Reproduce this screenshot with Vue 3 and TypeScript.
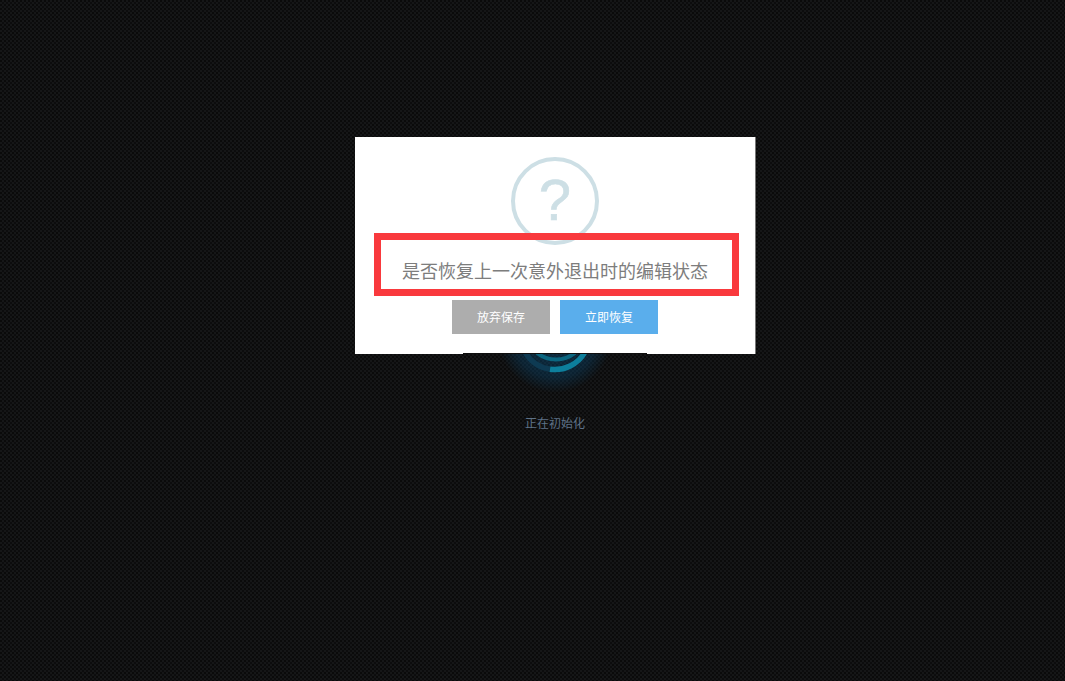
<script setup lang="ts">
const title: string = '是否恢复上一次意外退出时的编辑状态'
</script>

<template>
  <div class="page">
    <div class="loader">
      <div class="spinner">
        <svg width="120" height="120" viewBox="0 0 120 120">
          <path class="arc dim" d="M 30 77 A 34.5 34.5 0 0 0 55 94.2" />
          <path class="arc bright" d="M 55 94.2 A 34.5 34.5 0 0 0 90 77" />
          <path class="arc inner" d="M 42 78 A 31 31 0 0 0 80 78" />
        </svg>
      </div>
      <div class="loading-text">正在初始化</div>
    </div>

    <div class="modal">
      <div class="icon">
        <svg width="90" height="90" viewBox="0 0 90 90">
          <circle cx="45" cy="45" r="42" fill="none" stroke="#cddfe5" stroke-width="4" />
        </svg>
        <span class="mark">?</span>
      </div>
      <div class="message">{{ title }}</div>
      <div class="actions">
        <button class="btn grey" type="button">放弃保存</button>
        <button class="btn blue" type="button">立即恢复</button>
      </div>
      <div class="edge"></div>
    </div>
  </div>
</template>

<style scoped>
.page {
  position: relative;
  width: 1065px;
  height: 681px;
  box-sizing: border-box;
  padding-left: 45px;
  overflow: hidden;
  display: flex;
  justify-content: center;
  background-color: #151617;
  background-image:
    radial-gradient(circle at 1px 1px, #0a0a0a 1px, transparent 1.3px),
    radial-gradient(circle at 3px 3px, #0c0c0d 1px, transparent 1.3px);
  background-size: 4px 4px;
  font-family: "Liberation Sans", "Noto Sans CJK SC", sans-serif;
}
.loader {
  display: flex;
  flex-direction: column;
  align-items: center;
  padding-top: 275px;
}
.spinner {
  width: 120px;
  height: 120px;
  border-radius: 50%;
  background: radial-gradient(circle at 50% 50%, rgba(10, 80, 125, 0.5) 0, rgba(10, 70, 110, 0.38) 50%, rgba(10, 60, 90, 0) 68%);
}
.arc {
  fill: none;
  stroke-width: 5.5;
}
.arc.dim {
  stroke: #0e3a52;
}
.arc.bright {
  stroke: #0d7f9c;
}
.arc.inner {
  stroke: #0b6680;
  stroke-width: 4;
}
.loading-text {
  margin-top: 21px;
  font-size: 12px;
  line-height: 16px;
  color: #5e7287;
}
.modal {
  position: absolute;
  left: 355px;
  top: 137px;
  width: 400px;
  height: 217px;
  box-sizing: border-box;
  padding-top: 19px;
  background: #fff;
  box-shadow: 1px 0 0 #777;
  display: flex;
  flex-direction: column;
  align-items: center;
}
.icon {
  position: relative;
  width: 90px;
  height: 90px;
  flex: none;
  display: flex;
  align-items: center;
  justify-content: center;
}
.icon svg {
  position: absolute;
  inset: 0;
}
.mark {
  position: relative;
  top: -1px;
  font-family: "Liberation Sans", sans-serif;
  font-size: 58px;
  line-height: 58px;
  color: #cddfe5;
  -webkit-text-stroke: 0.6px #cddfe5;
}
.message {
  position: relative;
  flex: none;
  box-sizing: border-box;
  width: 365px;
  height: 63px;
  margin-top: -13px;
  margin-left: 2px;
  padding-top: 19px;
  padding-right: 2px;
  border: 7px solid #f9393d;
  font-size: 18px;
  line-height: 26px;
  text-align: center;
  color: #7d7d7d;
  white-space: nowrap;
}
.actions {
  display: flex;
  gap: 10px;
  margin-top: 4px;
}
.btn {
  width: 98px;
  height: 34px;
  border: 0;
  padding: 0 0 2px;
  font-family: inherit;
  font-size: 12px;
  color: #fff;
}
.grey {
  background: #adadad;
}
.blue {
  background: #5aaeec;
}
.edge {
  position: absolute;
  left: 108px;
  bottom: 0;
  width: 184px;
  height: 1px;
  background: #0e0e0e;
}
</style>
